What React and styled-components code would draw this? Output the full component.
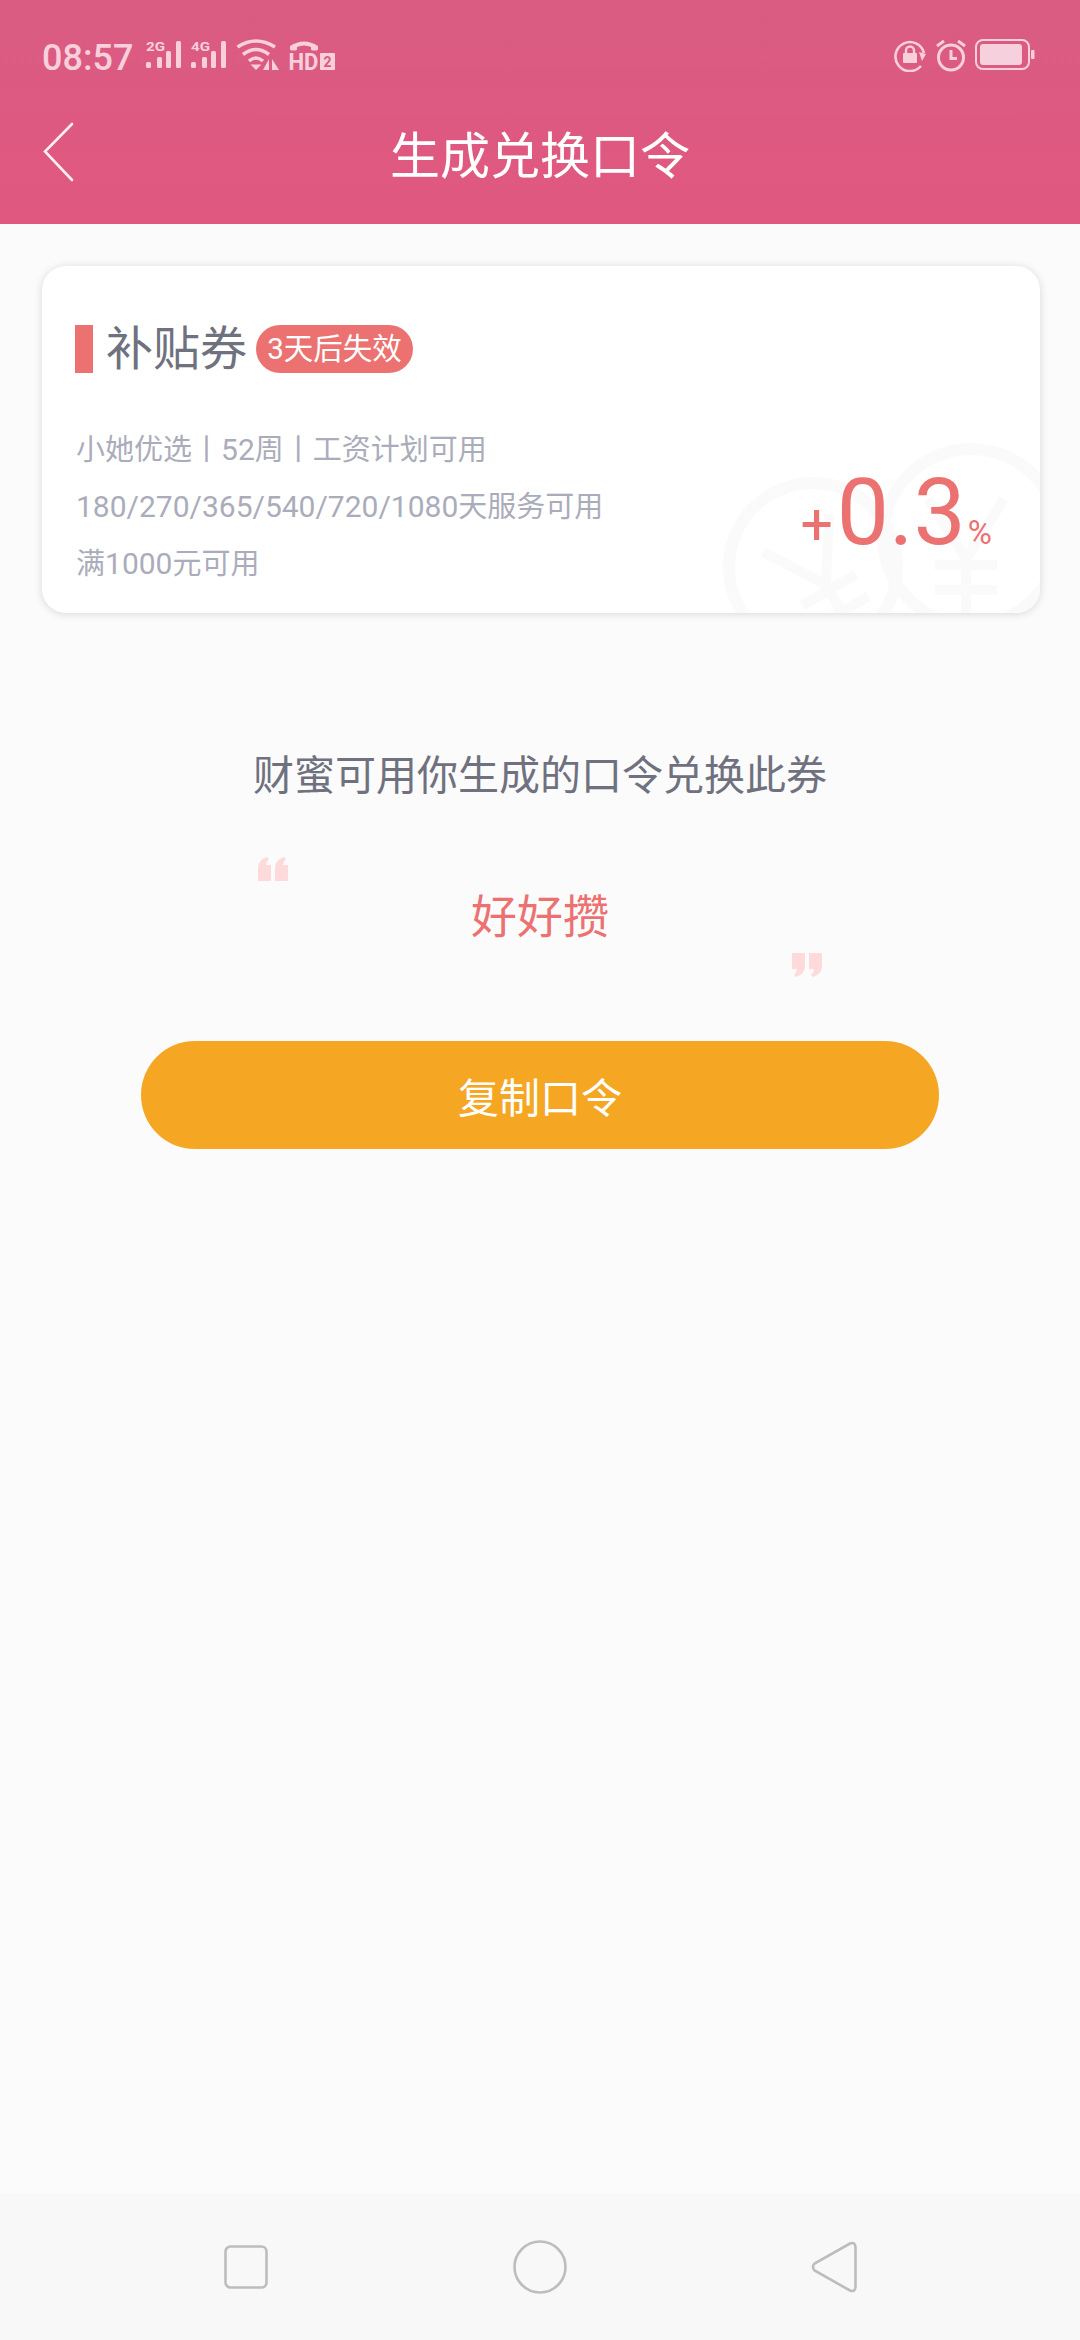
import React from 'react';
import styled, {createGlobalStyle} from 'styled-components';

const GlobalStyle = createGlobalStyle`
    html, body {
        margin: 0;
        padding: 0;
        background: #fbfbfb;
    }
    body {
        font-family: Roboto, "Noto Sans CJK SC", sans-serif;
    }
    * {
        box-sizing: border-box;
    }
`;

const STATUS_COLOR = '#f9cfdc';

const SignalIcon = ({label}) => (
    <svg width="36" height="30" viewBox="0 0 36 30">
        <text x="0" y="12" fontFamily="Roboto" fontWeight="700" fontSize="13" textLength="19" lengthAdjust="spacingAndGlyphs" fill={STATUS_COLOR}>{label}</text>
        <rect x="0" y="23" width="5" height="6" rx="1.5" fill={STATUS_COLOR} />
        <rect x="11" y="18" width="5" height="11" rx="1.5" fill={STATUS_COLOR} />
        <rect x="20" y="12" width="5" height="17" rx="1.5" fill={STATUS_COLOR} />
        <rect x="30" y="2" width="5" height="27" rx="1.5" fill={STATUS_COLOR} />
    </svg>
);

const WifiIcon = () => (
    <svg width="43" height="32" viewBox="0 0 43 32" fill="none" stroke={STATUS_COLOR} strokeWidth="3.6">
        <path d="M1.5 8 Q20 -4 39 8" />
        <path d="M7 15.5 Q20 5.5 33 15.5" />
        <path d="M13 22 Q20 16 27 22" />
        <path d="M17 26.5 L20 29.5 L23 26.5 Z" fill={STATUS_COLOR} strokeWidth="2" />
        <path d="M33 20 V31 H27 Z" fill={STATUS_COLOR} stroke="none" />
        <path d="M36 20 V31 H43 Z" fill={STATUS_COLOR} stroke="none" />
    </svg>
);

const HdIcon = () => (
    <svg width="47" height="38" viewBox="0 0 47 38">
        <path d="M2 10 V7 Q16 -2 30 7 V10 Q30 11.5 28 11.5 H25 Q23 11.5 23 10 V8 Q16 5 9 8 V10 Q9 11.5 7 11.5 H4 Q2 11.5 2 10 Z" fill={STATUS_COLOR} />
        <text x="0.5" y="31" fontFamily="Roboto" fontWeight="700" fontSize="23" textLength="30" lengthAdjust="spacingAndGlyphs" fill={STATUS_COLOR}>HD</text>
        <rect x="32" y="14" width="15" height="17" rx="1" fill={STATUS_COLOR} />
        <text x="35.5" y="28" fontFamily="Roboto" fontWeight="700" fontSize="14" fill="#da5a82">2</text>
    </svg>
);

const LockIcon = () => (
    <svg width="33" height="33" viewBox="0 0 33 33" fill="none">
        <path d="M27 27 A14.5 14.5 0 1 1 30 14" stroke={STATUS_COLOR} strokeWidth="2.6" />
        <path d="M25 13 L32 15 L28 22 Z" fill={STATUS_COLOR} />
        <rect x="9" y="14" width="14" height="10" rx="1" fill={STATUS_COLOR} />
        <path d="M12 15 V11.5 a4 4 0 0 1 8 0 V15" stroke={STATUS_COLOR} strokeWidth="2.4" />
    </svg>
);

const AlarmIcon = () => (
    <svg width="30" height="33" viewBox="0 0 30 33" fill="none" stroke={STATUS_COLOR}>
        <circle cx="15" cy="18.5" r="12.5" strokeWidth="3" />
        <path d="M15 11 V19.5 H21" strokeWidth="3" />
        <path d="M1 7 L8 2" strokeWidth="3" />
        <path d="M29 7 L22 2" strokeWidth="3" />
    </svg>
);

const BatteryIcon = () => (
    <svg width="60" height="31" viewBox="0 0 60 31">
        <rect x="1" y="1" width="53" height="29" rx="7" fill="none" stroke={STATUS_COLOR} strokeWidth="2" />
        <rect x="5" y="5" width="42" height="21" rx="3" fill="#f6d0dc" />
        <rect x="56" y="11" width="3.5" height="9" rx="1" fill={STATUS_COLOR} />
    </svg>
);

const BackIcon = () => (
    <svg width="31" height="60" viewBox="0 0 31 60" fill="none" stroke="#fdeef3" strokeWidth="2.6" strokeLinecap="round">
        <path d="M29 2 L2 29.5 L29 58" />
    </svg>
);

const YEN_PATH = 'M-38 -60 L0 0 L38 -60 M0 0 V90 M-31 6 H31 M-31 31 H31';

const Coins = () => (
    <CoinLayer viewBox="0 0 400 200" fill="none" stroke="#fafafa" strokeWidth="12">
        <circle cx="90" cy="125" r="84" />
        <g transform="translate(103 143) rotate(-30)" strokeWidth="10">
            <path d={YEN_PATH} />
        </g>
        <circle cx="248" cy="95" r="88" />
        <g transform="translate(243 117)" strokeWidth="10">
            <path d={YEN_PATH} />
        </g>
    </CoinLayer>
);

const QuoteMark = ({closing}) => (
    <QuoteSvg $closing={closing} width="31" height="24" viewBox="0 0 31 24" fill="#ffdada">
        <path d="M0 24 V11 Q0 3 9 0 L11 2 Q8 5 8 8 H13 V24 Z" />
        <path d="M17 24 V11 Q17 3 26 0 L28 2 Q25 5 25 8 H30 V24 Z" />
    </QuoteSvg>
);

export default function App() {
    return (
        <Page>
            <GlobalStyle />
            <Header>
                <StatusBar>
                    <StatusGroup>
                        <Clock>08:57</Clock>
                        <SignalIcon label="2G" />
                        <SignalIcon label="4G" />
                        <WifiIcon />
                        <HdIcon />
                    </StatusGroup>
                    <StatusGroup>
                        <LockIcon />
                        <AlarmIcon />
                        <BatteryIcon />
                    </StatusGroup>
                </StatusBar>
                <NavBar>
                    <BackIcon />
                    <NavTitle>生成兑换口令</NavTitle>
                </NavBar>
            </Header>
            <Main>
                <Card>
                    <Coins />
                    <CardTitleRow>
                        <TitleMark />
                        <CardTitle>补贴券</CardTitle>
                        <ExpireBadge>3天后失效</ExpireBadge>
                    </CardTitleRow>
                    <CardBody>
                        <Rules>
                            <Rule>小她优选丨<Digits>52</Digits>周丨工资计划可用</Rule>
                            <Rule><Digits>180/270/365/540/720/1080</Digits>天服务可用</Rule>
                            <Rule>满<Digits>1000</Digits>元可用</Rule>
                        </Rules>
                        <Amount>
                            <AmountSign>+</AmountSign>0.3<AmountUnit>%</AmountUnit>
                        </Amount>
                    </CardBody>
                </Card>
                <Hint>财蜜可用你生成的口令兑换此券</Hint>
                <QuoteBlock>
                    <QuoteMark />
                    <CodeWord>好好攒</CodeWord>
                    <QuoteMark closing />
                </QuoteBlock>
                <CopyButton>复制口令</CopyButton>
            </Main>
            <BottomNav>
                <svg width="44" height="44" viewBox="0 0 44 44" fill="none" stroke="#bdbdbd" strokeWidth="2.6">
                    <rect x="1.5" y="1.5" width="41" height="41" rx="5" />
                </svg>
                <svg width="54" height="54" viewBox="0 0 54 54" fill="none" stroke="#bdbdbd" strokeWidth="2.6">
                    <circle cx="27" cy="27" r="25.5" />
                </svg>
                <svg width="46" height="52" viewBox="0 0 46 52" fill="none" stroke="#bdbdbd" strokeWidth="2.6">
                    <path d="M39 2.5 Q44 0.5 44.5 6 V46 Q44 51.5 39 49.5 L3.5 29.5 Q0.5 26 3.5 22.5 Z" />
                </svg>
            </BottomNav>
        </Page>
    );
}

const Page = styled.div`
    width: 1080px;
    height: 2340px;
    display: flex;
    flex-direction: column;
    background: #fbfbfb;
    overflow: hidden;
`;

const Header = styled.header`
    height: 224px;
    flex-shrink: 0;
    background: linear-gradient(180deg, #d95c83 0%, #de5981 60%, #e0587f 100%);
`;

const StatusBar = styled.div`
    height: 80px;
    padding: 39px 45px 0 42px;
    display: flex;
    justify-content: space-between;
    align-items: flex-start;
`;

const StatusGroup = styled.div`
    display: flex;
    align-items: flex-start;
    gap: 9px;
`;

const Clock = styled.span`
    color: ${STATUS_COLOR};
    font-size: 36px;
    line-height: 36px;
    font-weight: 500;
    margin: 1px 4px 0 0;
`;

const NavBar = styled.div`
    height: 144px;
    padding: 0 44px 0 43px;
    display: flex;
    align-items: center;
    position: relative;
`;

const NavTitle = styled.h1`
    margin: 0;
    position: absolute;
    left: 0;
    right: 0;
    top: 47px;
    text-align: center;
    color: #fff;
    font-size: 50px;
    font-weight: 400;
    line-height: 60px;
`;

const Main = styled.main`
    flex: 1;
    display: flex;
    flex-direction: column;
    align-items: center;
    padding-top: 42px;
`;

const Card = styled.section`
    width: 998px;
    height: 347px;
    align-self: flex-start;
    margin-left: 42px;
    position: relative;
    overflow: hidden;
    background: #fff;
    border-radius: 24px;
    padding: 59px 33px 0;
    box-shadow: 0 1px 8px rgba(0, 0, 0, 0.14);
`;

const CoinLayer = styled.svg`
    position: absolute;
    width: 400px;
    height: 200px;
    right: -83px;
    bottom: -29px;
`;

const CardTitleRow = styled.div`
    display: flex;
    align-items: center;
    height: 48px;
    position: relative;
`;

const TitleMark = styled.span`
    width: 18px;
    height: 48px;
    background: #ec7272;
`;

const CardTitle = styled.h2`
    margin: 0 9px 0 13px;
    color: #70717f;
    font-size: 47px;
    line-height: 48px;
    font-weight: 400;
`;

const ExpireBadge = styled.span`
    height: 48px;
    width: 157px;
    border-radius: 24px;
    background: #ec7272;
    color: #fff;
    font-size: 29.5px;
    line-height: 48px;
    text-align: center;
    white-space: nowrap;
`;

const CardBody = styled.div`
    position: relative;
    margin-top: 56px;
    display: flex;
    justify-content: space-between;
    align-items: flex-start;
`;

const Rules = styled.div`
    display: flex;
    flex-direction: column;
    padding-left: 1px;
    gap: 15px;
`;

const Rule = styled.div`
    color: #abacbb;
    font-size: 29px;
    line-height: 41px;
    white-space: nowrap;
`;

const Digits = styled.span`
    font-size: 30px;
`;

const Amount = styled.div`
    color: #ec7272;
    font-size: 93px;
    line-height: 93px;
    margin: 37px 15px 0 0;
    white-space: nowrap;
`;

const AmountSign = styled.span`
    font-size: 57px;
    margin-right: 4px;
`;

const AmountUnit = styled.span`
    font-size: 33px;
    margin-left: 2px;
`;

const Hint = styled.p`
    margin: 139px 0 0;
    color: #70717f;
    font-size: 41px;
    line-height: 48px;
`;

const QuoteBlock = styled.div`
    width: 564px;
    margin-top: 57px;
    display: flex;
    flex-direction: column;
    align-items: center;
`;

const QuoteSvg = styled.svg`
    align-self: ${props => (props.$closing ? 'flex-end' : 'flex-start')};
    transform: ${props => (props.$closing ? 'rotate(180deg)' : 'none')};
    flex-shrink: 0;
`;

const CodeWord = styled.div`
    color: #ec7272;
    font-size: 46px;
    line-height: 72px;
`;

const CopyButton = styled.button`
    margin-top: 64px;
    width: 798px;
    height: 108px;
    border: 0;
    border-radius: 54px;
    background: #f5a623;
    color: #fff;
    font-family: inherit;
    font-size: 41px;
`;

const BottomNav = styled.nav`
    height: 147px;
    flex-shrink: 0;
    background: #f8f8f8;
    display: grid;
    grid-template-columns: 1fr 1fr 1fr;
    justify-items: center;
    align-items: center;
    padding: 0 99px;
`;
